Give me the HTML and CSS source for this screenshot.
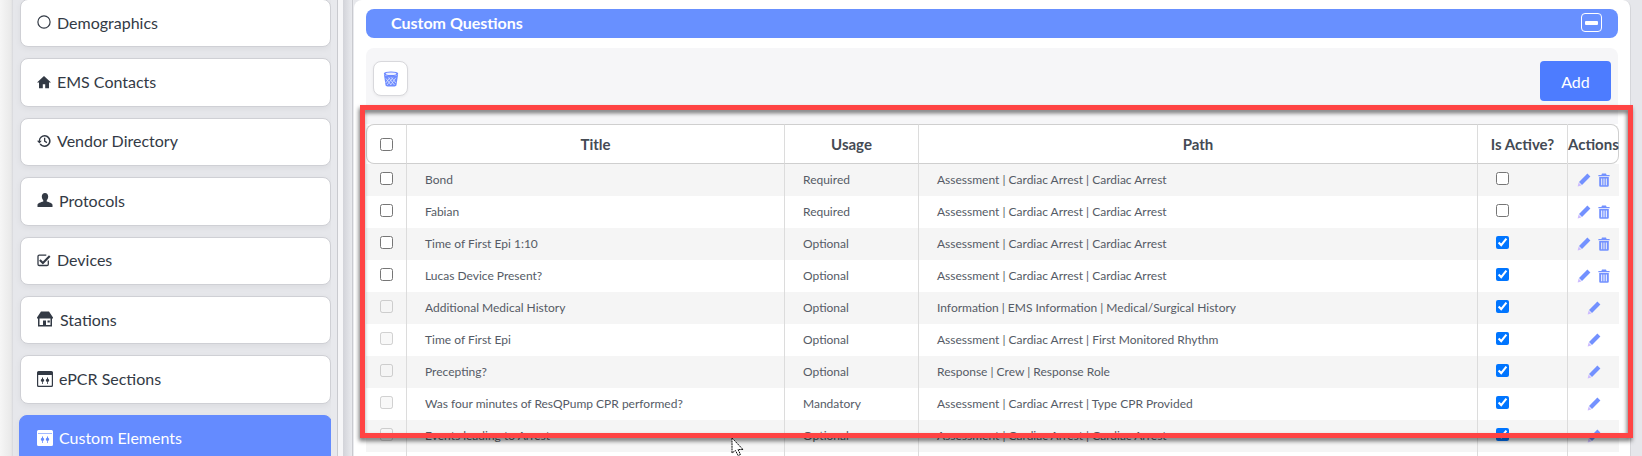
FILE: index.html
```html
<!DOCTYPE html>
<html lang="en">
<head>
<meta charset="utf-8">
<title>Custom Questions</title>
<link rel="stylesheet" href="styles.css">
</head>
<body>
<svg class="sprite" xmlns="http://www.w3.org/2000/svg">
  <symbol id="i-pencil" viewBox="0 0 14 14"><path d="M10.400.6 13.400 3.600 5 12 2 9Z" fill="#7391ff"/><path d="M1.600 9.600 4.400 12.400.6 13.400Z" fill="#cdbcff"/></symbol>
  <symbol id="i-trash" viewBox="0 0 12 14"><path d="M4 .5h4l.6 1.400h3v1.400H.4V1.900h3Z" fill="#7391ff"/><path fill-rule="evenodd" d="M1.200 4h9.600v8.600a1.200 1.200 0 0 1-1.200 1.200H2.400a1.200 1.200 0 0 1-1.200-1.200ZM3.200 5.600v6.600h1V5.600Zm2.300 0v6.600h1V5.600Zm2.300 0v6.600h1V5.600Z" fill="#7391ff"/></symbol>
</svg>
<div class="strip"></div>
<nav class="side">
  <a class="card"><svg class="ic" viewBox="0 0 14 14"><circle cx="7" cy="7" r="6.100" fill="none" stroke="#333a45" stroke-width="1.200"/></svg>Demographics</a>
  <a class="card"><svg class="ic" viewBox="0 0 14 14"><path d="M7 1 0 7.400h2V13.300h3.800V9.200h2.400v4.100H12V7.400h2Z" fill="#333a45"/></svg>EMS Contacts</a>
  <a class="card"><svg class="ic" viewBox="0 0 14 14"><path d="M7.600 1a6 6 0 1 1-5 9.300l1.200-.8a4.500 4.500 0 1 0-.8-2.800h1.800L2.400 9.400 0 6.700h1.700A6 6 0 0 1 7.600 1Z" fill="#333a45"/><path d="M7 3.800h1.300v3l2 1.300-.7 1.100L7 7.600Z" fill="#333a45"/></svg>Vendor Directory</a>
  <a class="card"><svg class="ic ic-w" viewBox="0 0 16 14"><path d="M8 0c2 0 3.200 1.500 3.200 3.600 0 1.500-.7 3-1.500 3.800v1.200c2.300.7 5.800 1.500 5.800 3.400V14H.5v-2c0-1.900 3.500-2.700 5.800-3.400V7.400C5.500 6.600 4.800 5.100 4.800 3.600 4.800 1.500 6 0 8 0Z" fill="#333a45"/></svg>Protocols</a>
  <a class="card"><svg class="ic" viewBox="0 0 14 14"><path d="M11.300 7.500v3.700a1.300 1.300 0 0 1-1.300 1.300H2.300A1.300 1.300 0 0 1 1 11.200V3.500a1.300 1.300 0 0 1 1.300-1.300h7" fill="none" stroke="#333a45" stroke-width="1.300"/><path d="m3.600 6.300 2.300 2.300L12 2.300l1.500 1.500-7.600 7.600-3.800-3.600Z" fill="#333a45"/></svg>Devices</a>
  <a class="card wider"><svg class="ic ic-w" viewBox="0 0 16 15"><path fill-rule="evenodd" d="M4 0h8l4 6v1h-1v8H1V7H0V6ZM2.500 7v6.600H6V9h3v4.600h4.500V7H2.500Zm8 2h2.300v2h-2.300Z" fill="#333a45"/></svg>Stations</a>
  <a class="card"><svg class="ic ic-w" viewBox="0 0 16 16"><path fill-rule="evenodd" d="M1.500 0h13A1.500 1.500 0 0 1 16 1.500v13a1.500 1.500 0 0 1-1.500 1.500h-13A1.500 1.500 0 0 1 0 14.500v-13A1.500 1.500 0 0 1 1.500 0ZM1.200 4v10.300c0 .3.200.5.500.5h12.600c.3 0 .5-.2.500-.5V4Z" fill="#333a45"/><path d="M5 6.500v1.200a1.700 1.700 0 1 0 1 0V6.500Zm5 0v1.200a1.700 1.700 0 1 0 1 0V6.500Zm-5 4.700v1.600h1v-1.600Zm5 0v1.600h1v-1.600Z" fill="#333a45"/></svg>ePCR Sections</a>
  <a class="card active"><svg class="ic ic-w" viewBox="0 0 16 16"><path d="M1.500 0h13A1.500 1.500 0 0 1 16 1.500v13a1.500 1.500 0 0 1-1.500 1.500h-13A1.500 1.500 0 0 1 0 14.500v-13A1.500 1.500 0 0 1 1.500 0Z" fill="#fff"/><path d="M1 3.400h14v.6H1Z" fill="#648bff"/><path d="M5 6.500v1.200a1.700 1.700 0 1 0 1 0V6.500Zm5 0v1.200a1.700 1.700 0 1 0 1 0V6.500Zm-5 4.700v1.600h1v-1.600Zm5 0v1.600h1v-1.600Z" fill="#648bff"/></svg>Custom Elements</a>
</nav>
<div class="gutter"></div>
<main class="panel">
  <header class="bar">
    <h2 class="bar-title">Custom Questions</h2>
    <span class="collapse"><span class="minus"></span></span>
  </header>
  <section class="tools">
    <button class="bin-btn" type="button" aria-label="Deleted items">
      <svg class="bin" viewBox="0 0 16 16"><ellipse cx="8" cy="2.800" rx="7.200" ry="2.400" fill="#6a86ff"/><ellipse cx="8" cy="2.800" rx="5.400" ry="1.200" fill="#eef1ff"/><path d="M.9 3.600c1.500 2 12.700 2 14.200 0l-1.700 10.800c-.4 1.600-10.400 1.600-10.800 0Z" fill="#6f8cff"/><path d="M3 7.500l5 6.500M5.500 6.500l6 7.500M8.500 6.500l4.500 5.500M12.800 6.800l-5 7M10 6.500l-6 7.500M7 6.500l-4.300 5.500" stroke="#dbe2ff" stroke-width=".8" fill="none"/></svg>
    </button>
    <button class="add" type="button">Add</button>
  </section>
  <table class="grid">
    <colgroup><col class="c-check"><col class="c-title"><col class="c-usage"><col class="c-path"><col class="c-active"><col class="c-actions"></colgroup>
    <thead>
      <tr><th class="first"><input type="checkbox"></th><th>Title</th><th>Usage</th><th>Path</th><th>Is Active?</th><th class="last">Actions</th></tr>
    </thead>
    <tbody>
      <tr><td class="chk"><input type="checkbox"></td><td>Bond</td><td>Required</td><td>Assessment | Cardiac Arrest | Cardiac Arrest</td><td class="act"><input type="checkbox"></td><td class="ops"><div class="ops-in"><svg class="pen"><use href="#i-pencil"/></svg><svg class="trash"><use href="#i-trash"/></svg></div></td></tr>
      <tr><td class="chk"><input type="checkbox"></td><td>Fabian</td><td>Required</td><td>Assessment | Cardiac Arrest | Cardiac Arrest</td><td class="act"><input type="checkbox"></td><td class="ops"><div class="ops-in"><svg class="pen"><use href="#i-pencil"/></svg><svg class="trash"><use href="#i-trash"/></svg></div></td></tr>
      <tr><td class="chk"><input type="checkbox"></td><td>Time of First Epi 1:10</td><td>Optional</td><td>Assessment | Cardiac Arrest | Cardiac Arrest</td><td class="act"><input type="checkbox" checked></td><td class="ops"><div class="ops-in"><svg class="pen"><use href="#i-pencil"/></svg><svg class="trash"><use href="#i-trash"/></svg></div></td></tr>
      <tr><td class="chk"><input type="checkbox"></td><td>Lucas Device Present?</td><td>Optional</td><td>Assessment | Cardiac Arrest | Cardiac Arrest</td><td class="act"><input type="checkbox" checked></td><td class="ops"><div class="ops-in"><svg class="pen"><use href="#i-pencil"/></svg><svg class="trash"><use href="#i-trash"/></svg></div></td></tr>
      <tr><td class="chk"><input type="checkbox" disabled></td><td>Additional Medical History</td><td>Optional</td><td>Information | EMS Information | Medical/Surgical History</td><td class="act"><input type="checkbox" checked></td><td class="ops"><div class="ops-in"><svg class="pen"><use href="#i-pencil"/></svg></div></td></tr>
      <tr><td class="chk"><input type="checkbox" disabled></td><td>Time of First Epi</td><td>Optional</td><td>Assessment | Cardiac Arrest | First Monitored Rhythm</td><td class="act"><input type="checkbox" checked></td><td class="ops"><div class="ops-in"><svg class="pen"><use href="#i-pencil"/></svg></div></td></tr>
      <tr><td class="chk"><input type="checkbox" disabled></td><td>Precepting?</td><td>Optional</td><td>Response | Crew | Response Role</td><td class="act"><input type="checkbox" checked></td><td class="ops"><div class="ops-in"><svg class="pen"><use href="#i-pencil"/></svg></div></td></tr>
      <tr><td class="chk"><input type="checkbox" disabled></td><td>Was four minutes of ResQPump CPR performed?</td><td>Mandatory</td><td>Assessment | Cardiac Arrest | Type CPR Provided</td><td class="act"><input type="checkbox" checked></td><td class="ops"><div class="ops-in"><svg class="pen"><use href="#i-pencil"/></svg></div></td></tr>
      <tr><td class="chk"><input type="checkbox" disabled></td><td>Events leading to Arrest</td><td>Optional</td><td>Assessment | Cardiac Arrest | Cardiac Arrest</td><td class="act"><input type="checkbox" checked></td><td class="ops"><div class="ops-in"><svg class="pen"><use href="#i-pencil"/></svg></div></td></tr>
      <tr class="tail"><td></td><td></td><td></td><td></td><td></td><td></td></tr>
    </tbody>
  </table>
</main>
<div class="highlight"></div>
<svg class="cursor" viewBox="0 0 14 20"><path d="M1 1v15l3.500-2.500 2.500 5 2.500-1-2.500-5H12Z" fill="#fff" stroke="#111" stroke-width="1" stroke-dasharray="2 .6"/></svg>
</body>
</html>
```
FILE: styles.css
```css
* { box-sizing: border-box; }
html, body { margin: 0; height: 456px; overflow: hidden; }
body {
  width: 1642px;
  display: flex;
  align-items: flex-start;
  background: #e6e7eb;
  font-family: "Lato", "Liberation Sans", sans-serif;
  color: #333a45;
}
.sprite { display: none; }

.strip {
  flex: 0 0 13px;
  height: 456px;
  background: linear-gradient(90deg, #f6f6f6, #e9e9e9 85%, #d6d7dc);
}

.side {
  flex: 0 0 311px;
  margin: -1px 0 0 7px;
  display: flex;
  flex-direction: column;
  gap: 11px;
}
.card {
  display: flex;
  align-items: center;
  gap: 6px;
  height: 48.400px;
  padding: 0 0 2px 16px;
  background: #fff;
  border: 1px solid #cfd0d5;
  border-radius: 8px;
  box-shadow: 0 2px 6px rgba(0,0,0,.05);
  font-size: 16px;
  flex: none;
}
.wider { gap: 7px; }
.ic { width: 14px; height: 14px; flex: none; }
.ic-w { width: 16px; height: 16px; }
.active {
  margin: 0 -1px;
  padding-left: 17px;
  background: #648bff;
  border-color: #648bff;
  color: #fff;
}

.gutter {
  flex: 0 0 23px;
  height: 456px;
  background:
    linear-gradient(90deg, #e8e9ed 0 6px, #c9cacf 6px 7px, #f6f6f8 7px 12px, #d2d3d9 12px, #e9eaee 21px, #c9cacf 21px 22px, #e9eaee 22px);
}

.panel {
  flex: 0 0 1277px;
  height: 456px;
  padding: 9px 12px 0;
  background: #fff;
  border-right: 1px solid #d5d6da;
  border-radius: 8px 8px 0 0;
  overflow: hidden;
}
.bar {
  height: 29px;
  padding: 0 5px 2px 25px;
  display: flex;
  align-items: center;
  justify-content: space-between;
  background: #6890ff;
  border-radius: 8px;
  color: #fff;
}
.bar-title { margin: 0; font-size: 16px; font-weight: 700; }
.collapse {
  width: 21px;
  height: 19px;
  margin-right: 11px;
  display: flex;
  align-items: center;
  justify-content: center;
  border: 1px solid #fff;
  border-radius: 4px;
}
.minus { width: 13px; height: 4px; background: #fff; border-radius: 1px; }

.tools {
  height: 76px;
  margin-top: 10px;
  padding: 13px 7px 0;
  display: flex;
  align-items: flex-start;
  justify-content: space-between;
  background: #f6f6f8;
  border-radius: 8px 8px 0 0;
}
.bin-btn {
  width: 35px;
  height: 35px;
  padding: 0;
  display: flex;
  align-items: center;
  justify-content: center;
  background: #fff;
  border: 1px solid #d8d8dc;
  border-radius: 8px;
  box-shadow: 0 1px 3px rgba(0,0,0,.06);
}
.bin { width: 16px; height: 16px; }
.add {
  width: 71px;
  height: 40px;
  background: #4d7cff;
  border: 0;
  border-radius: 4px;
  color: #fff;
  font: 400 16px "Lato", "Liberation Sans", sans-serif;
}

.grid {
  width: 1253px;
  table-layout: fixed;
  border-collapse: separate;
  border-spacing: 0;
  font-size: 12px;
  color: #555b66;
}
.c-check { width: 40px; }
.c-title { width: 378px; }
.c-usage { width: 134px; }
.c-path { width: 559px; }
.c-active { width: 90px; }
.c-actions { width: 52px; }
.grid th {
  height: 40px;
  padding: 0;
  background: #fff;
  border-top: 1px solid #cfcfcf;
  border-bottom: 1px solid #cfcfcf;
  border-left: 1px solid #dcdcdc;
  font-size: 15px;
  font-weight: 700;
  color: #444a54;
  white-space: nowrap;
  overflow: visible;
}
.grid th.first { border-left: 1px solid #cfcfcf; border-radius: 8px 0 0 8px; }
.grid th.last { border-right: 1px solid #cfcfcf; border-radius: 0 8px 8px 0; }
.grid input { display: block; width: 13px; height: 13px; margin: 0; }
.grid th.first input { margin-left: 13px; }
.grid td {
  height: 32px;
  padding: 0 8px 1px 18px;
  border-left: 1px solid #dcdcdc;
  white-space: nowrap;
}
.grid tbody tr:nth-child(odd) td { background: #f5f5f5; }
.grid tbody td:first-child { border-left: 0; }
.grid td.chk { padding: 0 0 3px 14px; }
.grid td.act { padding: 0 0 3px 18px; }
.grid td.ops { padding: 0; }
.ops-in { display: flex; align-items: center; justify-content: center; gap: 7px; height: 32px; }
.pen { width: 14px; height: 14px; }
.trash { width: 12px; height: 14px; }
.grid tr.tail td { height: 4px; padding: 0; background: #fff; }

.highlight {
  position: absolute;
  left: 360px;
  top: 105px;
  width: 1273px;
  height: 333px;
  border: 5px solid #ff4444;
  filter: drop-shadow(-1px 3px 2px rgba(0,0,0,.55));
  pointer-events: none;
}
.cursor {
  position: absolute;
  left: 731px;
  top: 437px;
  width: 14px;
  height: 20px;
}
```
